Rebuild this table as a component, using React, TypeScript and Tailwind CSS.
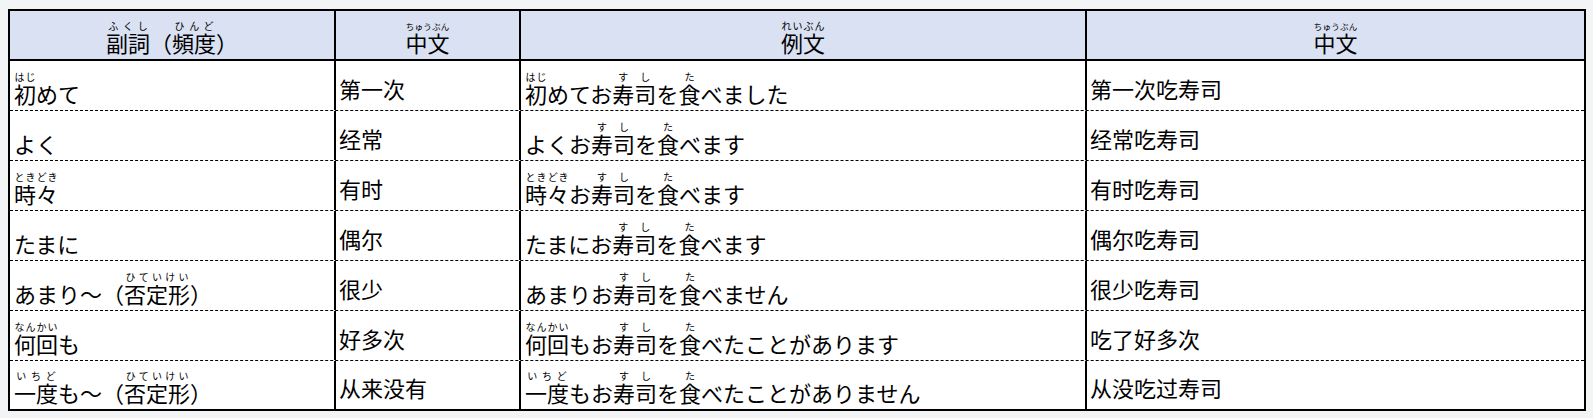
import React from "react";

type Seg = string | [string, string];

const R = ({ segs, rtClass = "text-[10px]" }: { segs: Seg[]; rtClass?: string }) => (
  <span>
    {segs.map((s, i) =>
      typeof s === "string" ? (
        <span key={i}>{s}</span>
      ) : (
        <ruby key={i}>
          {s[0]}
          <rt className={`${rtClass} leading-none`}>{s[1]}</rt>
        </ruby>
      )
    )}
  </span>
);

const rows: { a: Seg[]; b: string; c: Seg[]; d: string }[] = [
  {
    a: [["初", "はじ"], "めて"],
    b: "第一次",
    c: [["初", "はじ"], "めてお", ["寿司", "すし"], "を", ["食", "た"], "べました"],
    d: "第一次吃寿司",
  },
  {
    a: ["よく"],
    b: "经常",
    c: ["よくお", ["寿司", "すし"], "を", ["食", "た"], "べます"],
    d: "经常吃寿司",
  },
  {
    a: [["時々", "ときどき"]],
    b: "有时",
    c: [["時々", "ときどき"], "お", ["寿司", "すし"], "を", ["食", "た"], "べます"],
    d: "有时吃寿司",
  },
  {
    a: ["たまに"],
    b: "偶尔",
    c: ["たまにお", ["寿司", "すし"], "を", ["食", "た"], "べます"],
    d: "偶尔吃寿司",
  },
  {
    a: ["あまり～（", ["否定形", "ひていけい"], "）"],
    b: "很少",
    c: ["あまりお", ["寿司", "すし"], "を", ["食", "た"], "べません"],
    d: "很少吃寿司",
  },
  {
    a: [["何回", "なんかい"], "も"],
    b: "好多次",
    c: [["何回", "なんかい"], "もお", ["寿司", "すし"], "を", ["食", "た"], "べたことがあります"],
    d: "吃了好多次",
  },
  {
    a: [["一度", "いちど"], "も～（", ["否定形", "ひていけい"], "）"],
    b: "从来没有",
    c: [["一度", "いちど"], "もお", ["寿司", "すし"], "を", ["食", "た"], "べたことがありません"],
    d: "从没吃过寿司",
  },
];

const jp = { fontFamily: '"Noto Sans CJK JP", sans-serif' };
const sc = { fontFamily: '"Noto Sans CJK SC", sans-serif' };

export default function App() {
  return (
    <div className="min-h-screen bg-[#f3f4f6] pt-[9px] pl-2">
      <div className="w-[1578px] border-2 border-black bg-white text-black text-[22px] leading-[22px]" style={jp}>
        <div className="grid grid-cols-[324px_185px_566px_499px] h-[50px] border-b-2 border-black bg-[#d9e1f2]">
          <div className="flex items-end justify-center pb-[6px]">
            <R segs={[["副詞", "ふくし"], "（", ["頻度", "ひんど"], "）"]} />
          </div>
          <div className="flex items-end justify-center pb-[6px] border-l-2 border-black">
            <R segs={[["中文", "ちゅうぶん"]]} rtClass="text-[8.5px]" />
          </div>
          <div className="flex items-end justify-center pb-[6px] border-l-2 border-black">
            <R segs={[["例文", "れいぶん"]]} />
          </div>
          <div className="flex items-end justify-center pb-[6px] border-l-2 border-black">
            <R segs={[["中文", "ちゅうぶん"]]} rtClass="text-[8.5px]" />
          </div>
        </div>
        {rows.map((r, i) => {
          const last = i === rows.length - 1;
          return (
            <div
              key={i}
              className={`grid grid-cols-[324px_185px_566px_499px] ${last ? "h-[48px]" : "h-[50px] border-b border-dashed border-black"}`}
            >
              <div className="flex items-end pl-1 pb-[6px]">
                <R segs={r.a} />
              </div>
              <div className="flex items-center pl-[3px] pt-1 border-l-2 border-black" style={sc}>
                {r.b}
              </div>
              <div className="flex items-end pl-1 pb-[6px] border-l-2 border-black">
                <R segs={r.c} />
              </div>
              <div className="flex items-center pl-[3px] pt-1 border-l-2 border-black" style={sc}>
                {r.d}
              </div>
            </div>
          );
        })}
      </div>
    </div>
  );
}
